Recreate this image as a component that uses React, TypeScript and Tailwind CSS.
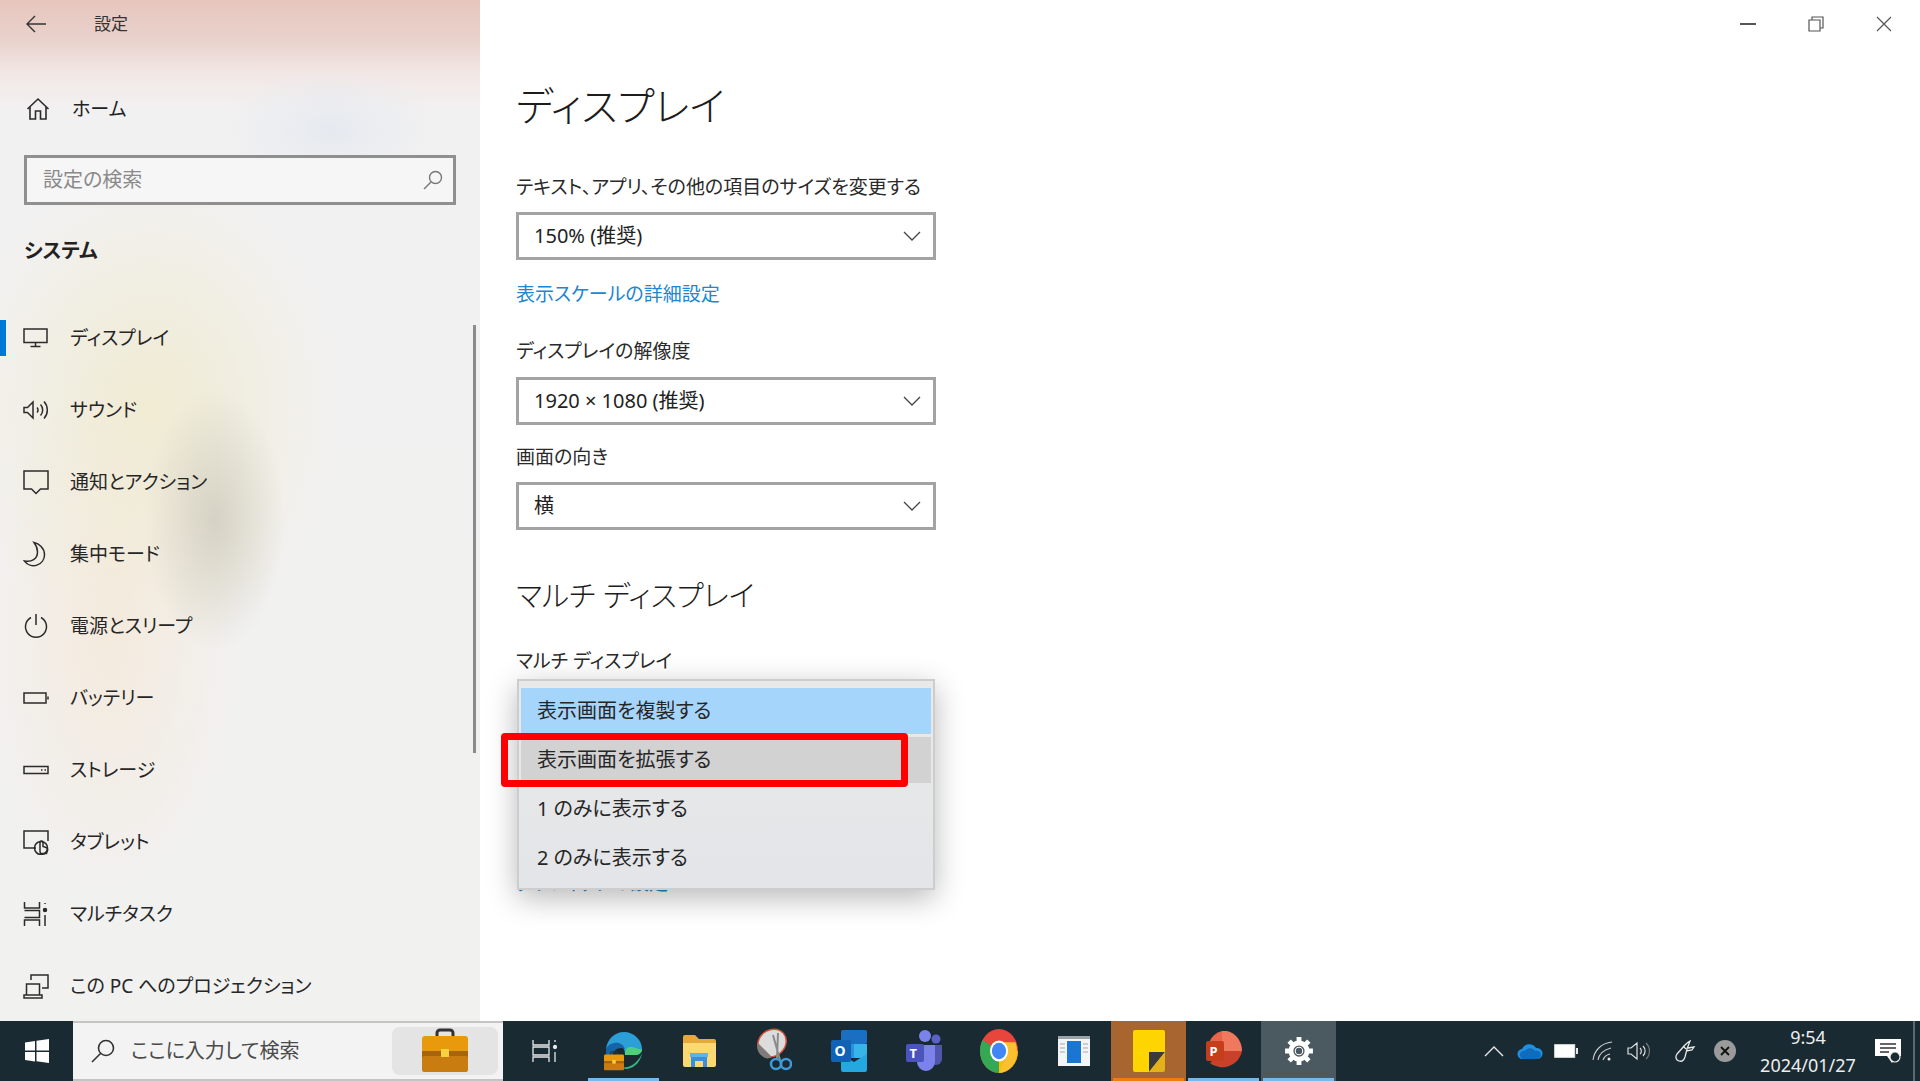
import { ReactNode } from 'react';

const ink = 'stroke-[#2b2b2b]';

function NavIcon({ children }: { children: ReactNode }) {
  return (
    <svg viewBox="0 0 26 26" className={`h-[26px] w-[26px] fill-none ${ink}`} strokeWidth={1.5}>
      {children}
    </svg>
  );
}

const navItems: { label: string; icon: ReactNode }[] = [
  {
    label: 'ディスプレイ',
    icon: (
      <NavIcon>
        <path d="M1 4h23v13.5H1zM12.5 17.5v3.5M7.5 21.5h10" />
      </NavIcon>
    ),
  },
  {
    label: 'サウンド',
    icon: (
      <NavIcon>
        <path d="M1 10.5v5h3.5L10 21V5l-5.500 5.500zM14 10.500a3.500 3.500 0 0 1 0 5M17.500 7.500a8 8 0 0 1 0 11M21 4.500a12.500 12.500 0 0 1 0 17" />
      </NavIcon>
    ),
  },
  {
    label: '通知とアクション',
    icon: (
      <NavIcon>
        <path d="M1 2h24v18h-7.500L13 24.500 8.500 20H1z" />
      </NavIcon>
    ),
  },
  {
    label: '集中モード',
    icon: (
      <NavIcon>
        <path d="M12 1.500a11 11 0 0 1-10.500 20A11 11 0 1 0 12 1.500zM12 1.500c4 1 10 5.500 9 13a11 11 0 0 1-19.500 7c6 2 12-3 10.500-20z" strokeWidth={0} />
        <path d="M11 1.500c5 1 10.500 5.500 10.500 12A11 11 0 0 1 1.500 20c7 1.500 13-2 13-9 0-3.500-1.500-7-3.500-9.500z" />
      </NavIcon>
    ),
  },
  {
    label: '電源とスリープ',
    icon: (
      <NavIcon>
        <path d="M8 4.500a10.500 10.500 0 1 0 10 0M13 1v11" />
      </NavIcon>
    ),
  },
  {
    label: 'バッテリー',
    icon: (
      <NavIcon>
        <path d="M1 8h22v10H1zM25 11.500v3" />
      </NavIcon>
    ),
  },
  {
    label: 'ストレージ',
    icon: (
      <NavIcon>
        <path d="M1 9.500h24v7H1zM18 13h1.500M21.500 13H23" />
      </NavIcon>
    ),
  },
  {
    label: 'タブレット',
    icon: (
      <NavIcon>
        <path d="M13 19H1V2h24v10M17 22.500v-9a1.500 1.500 0 0 1 3 0v4l3 1c1.500.5 2 1.500 1.500 3l-1 3h-6z" />
        <circle cx="18" cy="19" r="6.500" />
      </NavIcon>
    ),
  },
  {
    label: 'マルチタスク',
    icon: (
      <NavIcon>
        <path d="M1.500 1v6h15V1M1.500 25v-6h15v6M1.500 9.500h15v7h-15M22 14v11M22 2v1" />
        <circle cx="22" cy="9" r="1.500" fill="#2b2b2b" />
      </NavIcon>
    ),
  },
  {
    label: 'この PC へのプロジェクション',
    icon: (
      <NavIcon>
        <path d="M8 7V2h17v13h-6M1 22h18v3H1zM3.500 22V11h13v11" />
      </NavIcon>
    ),
  },
];

function Select({ value }: { value: string }) {
  return (
    <div className="flex h-[48px] w-[420px] items-center justify-between border-[3px] border-[#a3a3a3] bg-white pl-[15px] pr-[12px] text-[20px] text-[#222222]">
      <span>{value}</span>
      <svg viewBox="0 0 18 10" className="h-[10px] w-[18px] fill-none stroke-[#444444]" strokeWidth={1.3}>
        <path d="M1 1l8 8 8-8" />
      </svg>
    </div>
  );
}

function Label({ children }: { children: ReactNode }) {
  return <div className="h-[28px] text-[19px] leading-[28px] text-[#2a2a2a]">{children}</div>;
}

function Sidebar() {
  return (
    <aside className="relative h-full w-[480px] shrink-0 overflow-hidden bg-[radial-gradient(ellipse_70px_130px_at_215px_520px,rgba(205,200,185,0.75),transparent),radial-gradient(ellipse_190px_240px_at_150px_410px,rgba(240,234,205,0.85),transparent),radial-gradient(ellipse_130px_260px_at_110px_640px,rgba(245,232,215,0.75),transparent),radial-gradient(ellipse_110px_60px_at_330px_130px,rgba(228,233,240,0.9),transparent),linear-gradient(to_bottom,#e6c6bd_0px,#e9d2cc_40px,#f2e8e6_75px,#f2f1f1_110px,#f1f1f0_100%)]">
      <div className="flex h-[48px] items-center pl-[26px]">
        <svg viewBox="0 0 20 18" className="h-[18px] w-[20px] fill-none stroke-[#333333]" strokeWidth={1.4}>
          <path d="M9 1L1 9l8 8M1 9h19" />
        </svg>
        <span className="ml-[48px] text-[17px] text-[#333333]">設定</span>
      </div>

      <div className="mt-[37px] flex h-[48px] items-center pl-[26px]">
        <svg viewBox="0 0 24 24" className="h-[24px] w-[24px] fill-none stroke-[#2b2b2b]" strokeWidth={1.6}>
          <path d="M1.500 12L12 2l10.500 10M4 10v12h5.500v-8h5v8H20V10" />
        </svg>
        <span className="ml-[22px] text-[19px] text-[#222222]">ホーム</span>
      </div>

      <div className="mx-[24px] mt-[22px] flex h-[50px] items-center justify-between border-[3px] border-[#8f8f8f] bg-[#f6f6f6] pl-[16px] pr-[10px]">
        <span className="text-[20px] text-[#8a8a8a]">設定の検索</span>
        <svg viewBox="0 0 20 20" className="h-[20px] w-[20px] fill-none stroke-[#777777]" strokeWidth={1.4}>
          <circle cx="12.500" cy="7.500" r="6" />
          <path d="M8 12L1 19" />
        </svg>
      </div>

      <div className="mt-[31px] pl-[24px] text-[20px] font-bold leading-[30px] text-[#222222]">システム</div>

      <nav className="mt-[36px]">
        {navItems.map((item, i) => (
          <div key={item.label} className="relative flex h-[72px] items-center pl-[23px]">
            {i === 0 && <div className="absolute left-0 top-[18px] h-[36px] w-[6px] bg-[#0078d7]" />}
            {item.icon}
            <span className="ml-[21px] whitespace-nowrap text-[19px] text-[#262626]">{item.label}</span>
          </div>
        ))}
      </nav>

      <div className="absolute left-[473px] top-[325px] h-[428px] w-[3px] bg-[#8c8c8c]" />
    </aside>
  );
}

function Dropdown() {
  const options = ['表示画面を複製する', '表示画面を拡張する', '1 のみに表示する', '2 のみに表示する'];
  return (
    <div className="absolute left-[1px] top-[-1px] z-10 flex h-[211px] w-[418px] flex-col gap-[3px] border-2 border-[#cdcdcd] bg-[linear-gradient(to_bottom,#e9e9e9,#e3e5e8)] px-[2px] pt-[7px] shadow-[0_8px_28px_rgba(0,0,0,0.28)]">
      {options.map((option, i) => (
        <div
          key={option}
          className={`flex h-[46px] items-center pl-[16px] text-[20px] text-[#262626] ${
            i === 0 ? 'bg-[#a6d5fb]' : i === 1 ? 'bg-[#d2d2d3]' : ''
          }`}
        >
          {option}
        </div>
      ))}
    </div>
  );
}

function Content() {
  return (
    <main className="relative flex-1 bg-white pl-[36px] pt-[76px]">
      <h1 className="h-[60px] text-[40px] font-light leading-[60px] text-[#1c1c1c]">ディスプレイ</h1>

      <div className="mt-[37px]">
        <Label>テキスト、アプリ、その他の項目のサイズを変更する</Label>
      </div>
      <div className="mt-[11px]">
        <Select value="150% (推奨)" />
      </div>
      <div className="mt-[20px] h-[28px] text-[19px] leading-[28px] text-[#2285cf]">表示スケールの詳細設定</div>
      <div className="mt-[29px]">
        <Label>ディスプレイの解像度</Label>
      </div>
      <div className="mt-[12px]">
        <Select value="1920 × 1080 (推奨)" />
      </div>
      <div className="mt-[18px]">
        <Label>画面の向き</Label>
      </div>
      <div className="mt-[11px]">
        <Select value="横" />
      </div>

      <h2 className="mt-[46px] h-[40px] text-[29px] font-light leading-[40px] text-[#1c1c1c]">マルチ ディスプレイ</h2>
      <div className="mt-[31px]">
        <Label>マルチ ディスプレイ</Label>
      </div>

      <div className="relative mt-[5px] w-[420px] pt-[189px]">
        <Dropdown />
        <div className="h-[28px] text-[19px] leading-[28px] text-[#2285cf]">グラフィックの設定</div>
      </div>

      {/* annotation drawn over the screenshot */}
      <div className="absolute left-[21px] top-[733px] z-20 h-[54px] w-[407px] rounded-[4px] border-[7px] border-[#ff0000]" />

      <div className="absolute right-0 top-0 flex h-[48px]">
        <div className="flex w-[68px] items-center justify-center">
          <div className="h-[1.500px] w-[16px] bg-[#555555]" />
        </div>
        <div className="flex w-[68px] items-center justify-center">
          <svg viewBox="0 0 16 16" className="h-[16px] w-[16px] fill-none stroke-[#555555]" strokeWidth={1.200}>
            <path d="M1 4h11v11H1zM4 4V1h11v11h-3" />
          </svg>
        </div>
        <div className="mr-[2px] flex w-[68px] items-center justify-center">
          <svg viewBox="0 0 16 16" className="h-[16px] w-[16px] fill-none stroke-[#555555]" strokeWidth={1.200}>
            <path d="M1 1l14 14M15 1L1 15" />
          </svg>
        </div>
      </div>
    </main>
  );
}

function Briefcase({ size }: { size: number }) {
  return (
    <svg viewBox="0 0 46 46" width={size} height={size}>
      <path d="M15 9V5a3 3 0 0 1 3-3h10a3 3 0 0 1 3 3v4" fill="none" stroke="#333333" strokeWidth={3} />
      <rect x="0" y="8" width="46" height="17" rx="3" fill="#e89a0c" />
      <rect x="0" y="23" width="46" height="7" fill="#a8640a" />
      <rect x="0" y="28" width="46" height="16" rx="2" fill="#c97c10" />
      <rect x="19" y="21" width="8" height="8" fill="#f7d23e" />
    </svg>
  );
}

const appIcons: { id: string; icon: ReactNode; className?: string; bar?: string }[] = [
  {
    id: 'edge',
    bar: 'bg-[#76b9ed]',
    icon: (
      <div className="relative h-[40px] w-[40px]">
        <svg viewBox="0 0 40 40" className="h-[40px] w-[40px]">
          <path d="M2 18C3 8 11 1 20 1c10 0 18 8 18 17 0 4-3 6-8 6h-9c0-7-3-10-8-10-5 0-9 2-11 4z" fill="#2a9fd8" />
          <path d="M38 18c0 4-3 6-8 6h-9c0-4 1-8 5-8 6 0 8 3 12 2z" fill="#4fcf7c" />
          <path d="M2 18c2-5 8-7 13-6 3 1 5 3 6 6-7-3-13 2-13 9 0 5 3 9 7 11C8 37 1 29 2 18z" fill="#1464a8" />
          <path d="M38 22c-1 8-7 15-15 16-4 0-7-1-9-3 6 3 14 1 19-5 2-2 4-5 5-8z" fill="#35b87c" />
        </svg>
        <div className="absolute bottom-0 left-0">
          <Briefcase size={20} />
        </div>
      </div>
    ),
  },
  {
    id: 'explorer',
    icon: (
      <svg viewBox="0 0 34 32" className="h-[32px] w-[34px]">
        <path d="M1 2a2 2 0 0 1 2-2h10l4 4h15a2 2 0 0 1 2 2v4H1z" fill="#e3a93a" />
        <path d="M1 8h33v22a2 2 0 0 1-2 2H3a2 2 0 0 1-2-2z" fill="#fcd873" />
        <path d="M9 32V21h16v11h-4v-6h-8v6z" fill="#3b8fd6" />
        <rect x="8" y="18" width="18" height="4" fill="#64b1ea" />
      </svg>
    ),
  },
  {
    id: 'snip',
    icon: (
      <svg viewBox="0 0 36 46" className="h-[46px] w-[36px]">
        <ellipse cx="16" cy="15" rx="15" ry="13" transform="rotate(-40 16 15)" fill="#dcdcdc" stroke="#d8503c" strokeWidth={1.500} />
        <path d="M6 28c-4-3-6-8-4-13l14 14c-3 2-7 2-10-1z" fill="#807a78" />
        <path d="M17 7l7 25M22 5l-1 25" stroke="#8a8a8a" strokeWidth={2} fill="none" />
        <circle cx="20" cy="36" r="5" fill="none" stroke="#3f9bd6" strokeWidth={2.500} />
        <circle cx="30" cy="36" r="5" fill="none" stroke="#3f9bd6" strokeWidth={2.500} />
      </svg>
    ),
  },
  {
    id: 'outlook',
    icon: (
      <div className="relative h-[42px] w-[36px]">
        <svg viewBox="0 0 36 42" className="h-[42px] w-[36px]">
          <rect x="10" y="0" width="26" height="14" rx="2" fill="#1b6fc2" />
          <rect x="10" y="14" width="13" height="14" fill="#2a8fdc" />
          <rect x="23" y="14" width="13" height="14" fill="#37b4e8" />
          <path d="M10 24l13 8 13-8v16a2 2 0 0 1-2 2H12a2 2 0 0 1-2-2z" fill="#25a8e0" />
          <rect x="0" y="10" width="20" height="22" rx="2" fill="#0f62b4" />
        </svg>
        <span className="absolute left-[4px] top-[11px] text-[14px] font-bold leading-[20px] text-white">O</span>
      </div>
    ),
  },
  {
    id: 'teams',
    icon: (
      <div className="relative h-[42px] w-[36px]">
        <svg viewBox="0 0 36 42" className="h-[42px] w-[36px]">
          <circle cx="19" cy="6" r="6" fill="#7b83eb" />
          <circle cx="30" cy="9" r="4.500" fill="#5a62c4" />
          <path d="M24 15h12v14a6 6 0 0 1-12 0z" fill="#4f56ab" />
          <path d="M9 15h20v17a9 9 0 0 1-18 0z" fill="#7b83eb" />
          <rect x="0" y="14" width="18" height="18" rx="2" fill="#4b53bc" />
        </svg>
        <span className="absolute left-[4px] top-[13px] text-[13px] font-bold leading-[20px] text-white">T</span>
      </div>
    ),
  },
  {
    id: 'chrome',
    icon: (
      <svg viewBox="0 0 40 40" className="h-[44px] w-[38px]" preserveAspectRatio="none">
        <circle cx="20" cy="20" r="20" fill="#e8453c" />
        <path d="M20 20L2.700 10A20 20 0 0 0 20 40l10-17.300z" fill="#34a853" />
        <path d="M20 20h20a20 20 0 0 1-20 20z" fill="#fbbc05" />
        <path d="M20 12h17.300A20 20 0 0 1 20 40l10-20z" fill="#fbc02d" />
        <circle cx="20" cy="20" r="9.500" fill="#ffffff" />
        <circle cx="20" cy="20" r="7.500" fill="#4285f4" />
      </svg>
    ),
  },
  {
    id: 'window',
    icon: (
      <svg viewBox="0 0 32 30" className="h-[30px] w-[32px]">
        <rect width="32" height="30" fill="#f2f4f5" />
        <rect y="0" width="32" height="3" fill="#9aa3a8" />
        <rect x="9" y="5" width="14" height="22" fill="#1976d2" />
        <path d="M2 8h5M2 12h5M2 16h5M25 8h5M25 12h5M25 16h5" stroke="#a4a9ad" strokeWidth={1} />
      </svg>
    ),
  },
  {
    id: 'sticky',
    className: 'bg-[#a8652f]',
    bar: 'bg-[#f07c12]',
    icon: (
      <svg viewBox="0 0 32 42" className="h-[42px] w-[32px]">
        <path d="M0 2a2 2 0 0 1 2-2h28a2 2 0 0 1 2 2v22L18 42H2a2 2 0 0 1-2-2z" fill="#ffd500" />
        <path d="M16 22h16L16 42z" fill="#3a3a3a" />
        <path d="M32 22v18a2 2 0 0 1-2 2H16z" fill="#e3b21a" />
      </svg>
    ),
  },
  {
    id: 'ppt',
    bar: 'bg-[#76b9ed]',
    icon: (
      <div className="relative h-[40px] w-[36px]">
        <svg viewBox="0 0 36 40" className="h-[40px] w-[36px]">
          <path d="M16 0a18 20 0 0 1 20 20H16z" fill="#f0785c" />
          <path d="M16 0A18 20 0 0 0 4 30l12-10z" fill="#e8644a" />
          <path d="M36 20a20 20 0 0 1-32 12l12-12z" fill="#c9412a" />
          <rect x="0" y="10" width="18" height="20" rx="2" fill="#c43e1c" />
        </svg>
        <span className="absolute left-[4px] top-[10px] text-[13px] font-bold leading-[20px] text-white">P</span>
      </div>
    ),
  },
  {
    id: 'settings',
    className: 'bg-[#4b5a60]',
    bar: 'bg-[#76b9ed]',
    icon: (
      <svg viewBox="0 0 28 28" className="h-[30px] w-[30px] fill-none stroke-white">
        <circle cx="14" cy="14" r="7.500" strokeWidth={4.500} />
        <path d="M14 1v5M14 22v5M1 14h5M22 14h5M4.800 4.800l3.500 3.500M19.700 19.700l3.500 3.500M23.200 4.800l-3.500 3.500M8.300 19.700l-3.500 3.500" strokeWidth={4.500} />
        <circle cx="14" cy="14" r="3.500" strokeWidth={1} className="fill-[#4b5a60]" />
      </svg>
    ),
  },
];

function Taskbar() {
  return (
    <footer className="flex h-[60px] shrink-0 items-stretch bg-[#1a2a32] font-['Noto_Sans','Noto_Sans_CJK_JP',sans-serif]">
      <div className="flex w-[73px] items-center justify-center">
        <svg viewBox="0 0 24 24" className="h-[24px] w-[24px] fill-white">
          <path d="M0 3.400l10-1.400v9.500H0zM11.500 1.800L24 0v11.500H11.500zM0 13h10v9.500L0 21zM11.500 13H24v11l-12.500-1.800z" />
        </svg>
      </div>

      <div className="flex w-[430px] items-center border-y-2 border-[#c4c4c4] bg-[#f3f3f3] pl-[18px] pr-[5px]">
        <svg viewBox="0 0 24 24" className="h-[24px] w-[24px] fill-none stroke-[#333333]" strokeWidth={1.600}>
          <circle cx="15" cy="9" r="7.500" />
          <path d="M9.500 14.500L1 23" />
        </svg>
        <span className="ml-[16px] text-[20px] text-[#4a4a4a]">ここに入力して検索</span>
        <div className="ml-auto flex h-[48px] w-[106px] items-center justify-center rounded-[8px] bg-[#e4e4e4]">
          <Briefcase size={46} />
        </div>
      </div>

      <div className="flex w-[83px] items-center justify-center">
        <svg viewBox="0 0 26 24" className="h-[24px] w-[26px] fill-none stroke-[#e8e8e8]" strokeWidth={1.300}>
          <path d="M1 1v5h16V1M1 23v-5h16v5M1 8h16v8H1zM23 13v10M23 1v2" />
          <circle cx="23" cy="8" r="1.500" fill="#e8e8e8" />
        </svg>
      </div>

      {appIcons.map((app) => (
        <div key={app.id} className={`relative flex w-[75px] items-center justify-center ${app.className ?? ''}`}>
          {app.icon}
          {app.bar && <div className={`absolute bottom-0 left-[2px] right-[2px] h-[3px] ${app.bar}`} />}
        </div>
      ))}

      <div className="ml-auto flex items-center text-white">
        <div className="flex w-[36px] justify-center">
          <svg viewBox="0 0 20 12" className="h-[12px] w-[20px] fill-none stroke-[#e8e8e8]" strokeWidth={1.400}>
            <path d="M1 11l9-9 9 9" />
          </svg>
        </div>
        <div className="flex w-[36px] justify-center">
          <svg viewBox="0 0 26 16" className="h-[16px] w-[26px]">
            <path d="M6 16a5 5 0 0 1-1-10 8 8 0 0 1 14-1 5.500 5.500 0 0 1 2 11z" fill="#1f8fe0" />
            <path d="M6 16a4 4 0 0 1 2-8 6 6 0 0 1 10 0 4 4 0 0 1 3 8z" fill="#0f6cbd" />
          </svg>
        </div>
        <div className="flex w-[36px] justify-center">
          <svg viewBox="0 0 24 14" className="h-[14px] w-[24px]">
            <rect x="0.700" y="0.700" width="20" height="12.600" fill="#ffffff" stroke="#e8e8e8" />
            <rect x="22" y="4" width="2" height="6" fill="#e8e8e8" />
          </svg>
        </div>
        <div className="flex w-[38px] justify-center">
          <svg viewBox="0 0 22 20" className="h-[20px] w-[22px] fill-none stroke-[#d0d0d0]" strokeWidth={1.100}>
            <path d="M1 19C2 10 9 2 20 1M6 19c1-6 5-10 13-12M11 19c1-3 3-5 7-6" />
            <circle cx="17" cy="18" r="1.500" fill="#e8e8e8" stroke="none" />
          </svg>
        </div>
        <div className="flex w-[34px] justify-center">
          <svg viewBox="0 0 24 20" className="h-[20px] w-[24px] fill-none stroke-[#e0e0e0]" strokeWidth={1.200}>
            <path d="M1 7v6h3l6 5V2L4 7zM13 7a4 4 0 0 1 0 6M16 5a7 7 0 0 1 0 10" />
            <path d="M19 2a11 11 0 0 1 0 16" stroke="#777777" />
          </svg>
        </div>
        <div className="ml-[8px] flex w-[42px] justify-center">
          <svg viewBox="0 0 22 22" className="h-[22px] w-[22px] fill-none stroke-[#e8e8e8]" strokeWidth={1.300}>
            <path d="M5 21c-3-1-4-4-2-7l8-9c2-2 3-3 5-4l-3 8-2 8c-1 3-3 5-6 4zM9 6l3 3M14 8l6-1-2 3-6 1" />
          </svg>
        </div>
        <div className="flex w-[38px] justify-center">
          <div className="flex h-[22px] w-[22px] items-center justify-center rounded-full bg-[#9a9a9a]">
            <svg viewBox="0 0 10 10" className="h-[10px] w-[10px] fill-none stroke-[#111111]" strokeWidth={1.800}>
              <path d="M1 1l8 8M9 1L1 9" />
            </svg>
          </div>
        </div>
        <div className="ml-[12px] flex w-[104px] flex-col items-center text-[18px] leading-[28px] text-[#eeeeee]">
          <span>9:54</span>
          <span>2024/01/27</span>
        </div>
        <div className="ml-[15px] flex w-[26px] justify-center">
          <svg viewBox="0 0 26 24" className="h-[24px] w-[26px]">
            <path d="M0 0h26v17h-4l-5 7-5-7H0z" fill="#ffffff" />
            <path d="M5 5h16M5 9h16M5 13h9" stroke="#333333" strokeWidth={1.300} />
            <circle cx="20" cy="18" r="5" fill="#1a2a32" stroke="#e8e8e8" strokeWidth={1.200} />
          </svg>
        </div>
        <div className="ml-[12px] h-full w-[7px] border-l-2 border-[#5c6a70]" />
      </div>
    </footer>
  );
}

export default function App() {
  return (
    <div className="flex h-[1081px] w-[1920px] flex-col overflow-hidden bg-white font-['Noto_Sans','Noto_Sans_CJK_JP',sans-serif] [font-feature-settings:'palt']">
      <div className="flex h-[1021px] shrink-0">
        <Sidebar />
        <Content />
      </div>
      <Taskbar />
    </div>
  );
}
